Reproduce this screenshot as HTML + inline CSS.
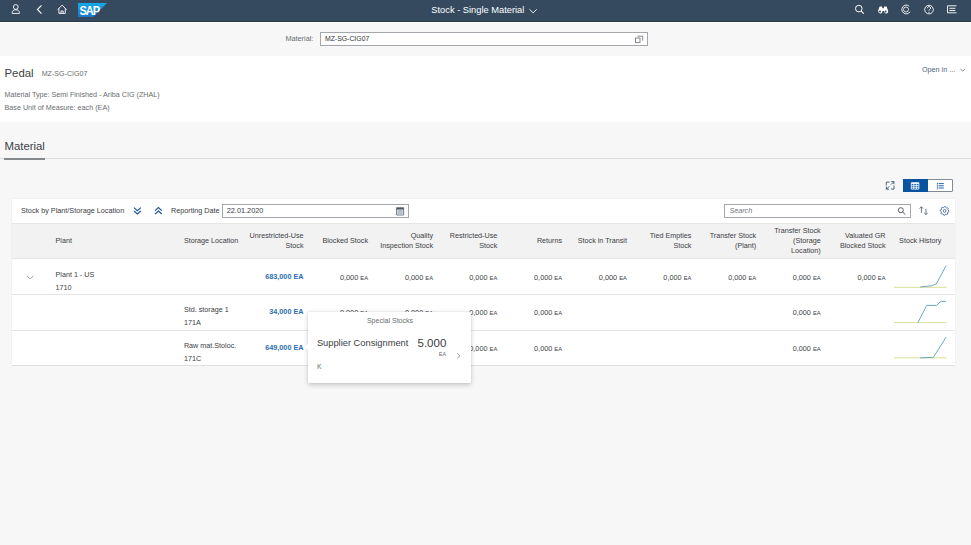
<!DOCTYPE html>
<html><head><meta charset="utf-8"><style>*{box-sizing:border-box;margin:0;padding:0}
html,body{width:971px;height:545px;overflow:hidden;background:#f7f7f7;font-family:"Liberation Sans",sans-serif;color:#32363a;position:relative}
.abs{position:absolute}
.t{position:absolute;white-space:nowrap}
svg{position:absolute;overflow:visible}
</style></head><body>
<div class="abs" style="left:0px;top:0px;width:971px;height:22px;background:#354a5f;border-bottom:1px solid #2b3a48"></div>
<div class="abs" style="left:0px;top:22px;width:971px;height:1px;background:#fdfdfd"></div>
<div class="t" style="left:431.30px;top:4.70px;font-size:9.3px;line-height:10px;color:#fff;">Stock - Single Material</div>
<svg style="left:0;top:0" width="971" height="22" fill="none" stroke="#fff" stroke-width="0.9">
<circle cx="15.8" cy="7" r="2.4"/>
<path d="M12.2 13.4v-1c0-1.7 1.5-2.6 3.6-2.6s3.6.9 3.6 2.6v1z"/>
<path d="M529.5 9.4l3.6 3.4l3.6-3.4" stroke-width="0.9"/>
<path d="M41.5 5.3l-4.1 4.2l4.1 4.2" stroke-width="1.1"/>
<path d="M57.6 9.6l4.5-4.4l4.5 4.4M58.9 8.4v5h6.4v-5M61 13.4v-2.4h2.2v2.4"/>
<circle cx="858.8" cy="8.6" r="3.3" stroke-width="1"/>
<path d="M861.2 11.1l2.6 2.6" stroke-width="1.1"/>
<path d="M909.2 6.2a4.4 4.4 0 1 0 0.8 5.6" stroke-width="0.9"/>
<circle cx="906" cy="9.5" r="2.5" stroke-width="0.8"/>
<circle cx="929" cy="9.6" r="4.3" stroke-width="0.9"/>
<path d="M927.4 8.2c0-1 .7-1.6 1.6-1.6s1.6.6 1.6 1.5c0 1.1-1.6 1.3-1.6 2.5M929 11.8v1.1" stroke-width="1"/>
<path d="M947.5 5.8h9M947.5 5.8v7h9M949.3 8.3h6M949.3 10.5h6" stroke-width="0.9"/>
</svg>
<svg style="left:0;top:0" width="971" height="22" fill="#fff">
<path d="M878 11.2l1.6-4.6h2.4l.4 1.6h1.4l.4-1.6h2.4l1.6 4.6a2 2 0 0 1-4 .6v-.8h-1.8v.8a2 2 0 0 1-4-.6z"/>
</svg>
<svg style="left:0;top:0" width="971" height="22"><circle cx="880" cy="11.4" r="1" fill="#354a5f"/><circle cx="885.6" cy="11.4" r="1" fill="#354a5f"/></svg>
<svg style="left:78px;top:3px" width="29" height="14" viewBox="0 0 29 14">
<defs><linearGradient id="g" x1="0" y1="0" x2="0" y2="1"><stop offset="0" stop-color="#16a9e6"/><stop offset="1" stop-color="#1a78c8"/></linearGradient></defs>
<path d="M0 0h29L15.2 14H0z" fill="url(#g)"/>
<text x="1.4" y="11.8" font-family="Liberation Sans" font-weight="bold" font-size="12.6" fill="#fff" letter-spacing="-1.2" textLength="19.6" lengthAdjust="spacingAndGlyphs">SAP</text>
</svg>
<div class="t" style="left:285.40px;top:34.10px;font-size:7.3px;line-height:10px;color:#6a6d70;">Material:</div>
<div class="abs" style="left:320px;top:32px;width:328px;height:14px;background:#fff;border:1px solid #a3a7ab"></div>
<div class="t" style="left:324.90px;top:33.80px;font-size:6.9px;line-height:10px;color:#32363a;">MZ-SG-CIG07</div>
<svg style="left:0;top:0" width="971" height="60" fill="none" stroke="#6a6d70" stroke-width="0.8">
<path d="M637.5 36.2h5.2v4.4"/><rect x="635.4" y="38" width="4.6" height="4.4"/>
</svg>
<div class="abs" style="left:0px;top:56px;width:971px;height:66px;background:#fff"></div>
<div class="t" style="left:4.50px;top:67.60px;font-size:11.4px;line-height:10px;color:#3c4044;">Pedal</div>
<div class="t" style="left:41.70px;top:69.00px;font-size:7.1px;line-height:10px;color:#6a6d70;">MZ-SG-CIG07</div>
<div class="t" style="left:4.50px;top:90.30px;font-size:7.2px;line-height:10px;color:#6a6d70;">Material Type: Semi Finished - Ariba CIG (ZHAL)</div>
<div class="t" style="left:4.50px;top:102.60px;font-size:7.2px;line-height:10px;color:#6a6d70;">Base Unit of Measure: each (EA)</div>
<div class="t" style="left:922.00px;top:65.40px;font-size:7.2px;line-height:10px;color:#4a6580;">Open in ...</div>
<svg style="left:0;top:0" width="971" height="100" fill="none" stroke="#6a6d70" stroke-width="0.8"><path d="M960.4 68.8l2.3 2.4l2.3-2.4"/></svg>
<div class="t" style="left:4.40px;top:141.40px;font-size:11.4px;line-height:10px;color:#3c4044;">Material</div>
<div class="abs" style="left:0px;top:158px;width:971px;height:1px;background:#dcdcdc"></div>
<div class="abs" style="left:4px;top:158px;width:41px;height:2px;background:#85888b"></div>
<svg style="left:0;top:0" width="971" height="200" fill="none" stroke="#3b5366" stroke-width="0.9">
<path d="M886.3 185.5v-3.4h3.4M894 185.5v3.6h-3M889.8 182.1"/>
<path d="M891.3 181.6h2.6v2.6M893.9 181.6l-3 3"/>
<path d="M889 189.2h-2.6v-2.6M886.4 189.2l3-3"/>
</svg>
<div class="abs" style="left:903px;top:179px;width:50px;height:13.2px;background:#fff;border:1px solid #7f8c98;border-radius:1px"></div>
<div class="abs" style="left:903px;top:179px;width:25px;height:13.2px;background:#0854a0"></div>
<svg style="left:0;top:0" width="971" height="200" fill="none" stroke-width="0.8">
<path d="M911.3 182.7h7.6v6.4h-7.6z" stroke="#fff"/>
<path d="M911.3 183.3h7.6" stroke="#fff" stroke-width="1.2"/>
<path d="M911.3 185.4h7.6M911.3 187.3h7.6M913.8 182.7v6.4M916.4 182.7v6.4" stroke="#fff"/>
<path d="M937.3 182.6v7.2" stroke="#6a7f94" stroke-width="0.6"/>
<path d="M938.6 183.6h5.2M938.6 185.8h5.2M938.6 188h5.2" stroke="#0854a0" stroke-width="0.9"/>
<path d="M937.2 183.6h.8M937.2 185.8h.8M937.2 188h.8" stroke="#0854a0" stroke-width="0.9"/>
</svg>
<div class="abs" style="left:12px;top:198.5px;width:942.5px;height:166px;background:#fff;box-shadow:0 0 0 0.5px rgba(0,0,0,0.04)"></div>
<div class="abs" style="left:12px;top:365px;width:942.5px;height:1.2px;background:#dedede"></div>
<div class="abs" style="left:12px;top:222.5px;width:943px;height:36.5px;background:#f2f2f2;border-top:1px solid #e5e5e5;border-bottom:1px solid #e5e5e5"></div>
<div class="abs" style="left:12px;top:294px;width:943px;height:1px;background:#e5e5e5"></div>
<div class="abs" style="left:12px;top:330px;width:943px;height:1px;background:#e5e5e5"></div>
<div class="t" style="left:21.00px;top:206.10px;font-size:7.25px;line-height:10px;color:#3c4044;">Stock by Plant/Storage Location</div>
<svg style="left:0;top:0" width="971" height="240" fill="none" stroke="#1f5a96" stroke-width="1.25">
<path d="M134 207.6l3.4 3l3.4-3M134 211l3.4 3l3.4-3"/>
<path d="M155 210.6l3.4-3l3.4 3M155 214l3.4-3l3.4 3"/>
</svg>
<div class="t" style="left:170.90px;top:206.30px;font-size:7.25px;line-height:10px;color:#3c4044;">Reporting Date</div>
<div class="abs" style="left:222px;top:204px;width:187px;height:14px;background:#fff;border:1px solid #a3a7ab"></div>
<div class="t" style="left:226.70px;top:206.20px;font-size:7.35px;line-height:10px;color:#3c4044;">22.01.2020</div>
<svg style="left:0;top:0" width="971" height="240" fill="none" stroke="#4a5a6a" stroke-width="0.8">
<path d="M396.6 207.6h7v7.4h-7z"/><path d="M396.6 208.8h7" stroke-width="1.6"/><path d="M397.5 211h5.2M397.5 213h5.2"/>
</svg>
<div class="abs" style="left:724px;top:204px;width:187px;height:14px;background:#fff;border:1px solid #a3a7ab"></div>
<div class="t" style="left:729.40px;top:205.90px;font-size:7.2px;line-height:10px;color:#74777a;font-style:italic">Search</div>
<svg style="left:0;top:0" width="971" height="240" fill="none" stroke="#32363a" stroke-width="0.8">
<circle cx="900.8" cy="210.2" r="2.5"/><path d="M902.6 212l2.8 2.6"/>
</svg>
<svg style="left:0;top:0" width="971" height="240" fill="none" stroke="#4a5866" stroke-width="0.8">
<path d="M921.4 213v-6.2M919.6 208.6l1.8-1.8l1.8 1.8M926 208.8v5.8M924.2 212.8l1.8 1.8l1.8-1.8"/>
</svg>
<svg style="left:0;top:0" width="971" height="240" fill="none" stroke="#2f5f8c" stroke-width="0.8">
<path d="M944.60 206.50L945.46 206.58L945.94 207.67L946.54 207.99L947.71 207.79L948.26 208.46L947.83 209.56L948.03 210.22L949.00 210.90L948.92 211.76L947.83 212.24L947.51 212.84L947.71 214.01L947.04 214.56L945.94 214.13L945.28 214.33L944.60 215.30L943.74 215.22L943.26 214.13L942.66 213.81L941.49 214.01L940.94 213.34L941.37 212.24L941.17 211.58L940.20 210.90L940.28 210.04L941.37 209.56L941.69 208.96L941.49 207.79L942.16 207.24L943.26 207.67L943.92 207.47z" stroke-linejoin="round"/>
<circle cx="944.6" cy="210.9" r="1.4"/>
</svg>
<div class="t" style="left:55.50px;top:235.90px;font-size:7.2px;line-height:10px;color:#3c4044;">Plant</div>
<div class="t" style="left:183.90px;top:235.90px;font-size:7.2px;line-height:10px;color:#3c4044;">Storage Location</div>
<div class="t" style="left:103.50px;width:200px;text-align:right;top:230.95px;font-size:7.2px;line-height:10px;color:#3c4044;">Unrestricted-Use</div>
<div class="t" style="left:103.50px;width:200px;text-align:right;top:240.85px;font-size:7.2px;line-height:10px;color:#3c4044;">Stock</div>
<div class="t" style="left:168.00px;width:200px;text-align:right;top:235.90px;font-size:7.2px;line-height:10px;color:#3c4044;">Blocked Stock</div>
<div class="t" style="left:233.00px;width:200px;text-align:right;top:230.95px;font-size:7.2px;line-height:10px;color:#3c4044;">Quality</div>
<div class="t" style="left:233.00px;width:200px;text-align:right;top:240.85px;font-size:7.2px;line-height:10px;color:#3c4044;">Inspection Stock</div>
<div class="t" style="left:297.30px;width:200px;text-align:right;top:230.95px;font-size:7.2px;line-height:10px;color:#3c4044;">Restricted-Use</div>
<div class="t" style="left:297.30px;width:200px;text-align:right;top:240.85px;font-size:7.2px;line-height:10px;color:#3c4044;">Stock</div>
<div class="t" style="left:362.10px;width:200px;text-align:right;top:235.90px;font-size:7.2px;line-height:10px;color:#3c4044;">Returns</div>
<div class="t" style="left:426.90px;width:200px;text-align:right;top:235.90px;font-size:7.2px;line-height:10px;color:#3c4044;">Stock in Transit</div>
<div class="t" style="left:491.40px;width:200px;text-align:right;top:230.95px;font-size:7.2px;line-height:10px;color:#3c4044;">Tied Empties</div>
<div class="t" style="left:491.40px;width:200px;text-align:right;top:240.85px;font-size:7.2px;line-height:10px;color:#3c4044;">Stock</div>
<div class="t" style="left:556.20px;width:200px;text-align:right;top:230.95px;font-size:7.2px;line-height:10px;color:#3c4044;">Transfer Stock</div>
<div class="t" style="left:556.20px;width:200px;text-align:right;top:240.85px;font-size:7.2px;line-height:10px;color:#3c4044;">(Plant)</div>
<div class="t" style="left:620.70px;width:200px;text-align:right;top:226.00px;font-size:7.2px;line-height:10px;color:#3c4044;">Transfer Stock</div>
<div class="t" style="left:620.70px;width:200px;text-align:right;top:235.90px;font-size:7.2px;line-height:10px;color:#3c4044;">(Storage</div>
<div class="t" style="left:620.70px;width:200px;text-align:right;top:245.80px;font-size:7.2px;line-height:10px;color:#3c4044;">Location)</div>
<div class="t" style="left:685.50px;width:200px;text-align:right;top:230.95px;font-size:7.2px;line-height:10px;color:#3c4044;">Valuated GR</div>
<div class="t" style="left:685.50px;width:200px;text-align:right;top:240.85px;font-size:7.2px;line-height:10px;color:#3c4044;">Blocked Stock</div>
<div class="t" style="left:899.10px;top:235.90px;font-size:7.2px;line-height:10px;color:#3c4044;">Stock History</div>
<svg style="left:0;top:0" width="971" height="300" fill="none" stroke="#8a8d90" stroke-width="0.8"><path d="M26.7 275.8l3.3 3.1l3.3-3.1"/></svg>
<div class="t" style="left:55.50px;top:269.50px;font-size:7.2px;line-height:10px;color:#3c4044;">Plant 1 - US</div>
<div class="t" style="left:55.50px;top:283.00px;font-size:7.2px;line-height:10px;color:#3c4044;">1710</div>
<div class="t" style="left:103.50px;width:200px;text-align:right;top:271.70px;font-size:7.25px;line-height:10px;color:#2a6db0;font-weight:bold">683,000 EA</div>
<div class="t" style="left:168.00px;width:200px;text-align:right;top:273.00px;font-size:7.3px;line-height:10px;color:#3c4044">0,000 <span style="font-size:5.8px">EA</span></div>
<div class="t" style="left:233.00px;width:200px;text-align:right;top:273.00px;font-size:7.3px;line-height:10px;color:#3c4044">0,000 <span style="font-size:5.8px">EA</span></div>
<div class="t" style="left:297.30px;width:200px;text-align:right;top:273.00px;font-size:7.3px;line-height:10px;color:#3c4044">0,000 <span style="font-size:5.8px">EA</span></div>
<div class="t" style="left:362.10px;width:200px;text-align:right;top:273.00px;font-size:7.3px;line-height:10px;color:#3c4044">0,000 <span style="font-size:5.8px">EA</span></div>
<div class="t" style="left:426.90px;width:200px;text-align:right;top:273.00px;font-size:7.3px;line-height:10px;color:#3c4044">0,000 <span style="font-size:5.8px">EA</span></div>
<div class="t" style="left:491.40px;width:200px;text-align:right;top:273.00px;font-size:7.3px;line-height:10px;color:#3c4044">0,000 <span style="font-size:5.8px">EA</span></div>
<div class="t" style="left:556.20px;width:200px;text-align:right;top:273.00px;font-size:7.3px;line-height:10px;color:#3c4044">0,000 <span style="font-size:5.8px">EA</span></div>
<div class="t" style="left:620.70px;width:200px;text-align:right;top:273.00px;font-size:7.3px;line-height:10px;color:#3c4044">0,000 <span style="font-size:5.8px">EA</span></div>
<div class="t" style="left:685.50px;width:200px;text-align:right;top:273.00px;font-size:7.3px;line-height:10px;color:#3c4044">0,000 <span style="font-size:5.8px">EA</span></div>
<div class="t" style="left:183.90px;top:304.80px;font-size:7.2px;line-height:10px;color:#3c4044;">Std. storage 1</div>
<div class="t" style="left:183.90px;top:317.60px;font-size:7.2px;line-height:10px;color:#3c4044;">171A</div>
<div class="t" style="left:103.50px;width:200px;text-align:right;top:306.70px;font-size:7.25px;line-height:10px;color:#2a6db0;font-weight:bold">34,000 EA</div>
<div class="t" style="left:168.00px;width:200px;text-align:right;top:307.70px;font-size:7.3px;line-height:10px;color:#3c4044">0,000 <span style="font-size:5.8px">EA</span></div>
<div class="t" style="left:233.00px;width:200px;text-align:right;top:307.70px;font-size:7.3px;line-height:10px;color:#3c4044">0,000 <span style="font-size:5.8px">EA</span></div>
<div class="t" style="left:297.30px;width:200px;text-align:right;top:307.70px;font-size:7.3px;line-height:10px;color:#3c4044">0,000 <span style="font-size:5.8px">EA</span></div>
<div class="t" style="left:362.10px;width:200px;text-align:right;top:307.70px;font-size:7.3px;line-height:10px;color:#3c4044">0,000 <span style="font-size:5.8px">EA</span></div>
<div class="t" style="left:620.70px;width:200px;text-align:right;top:307.70px;font-size:7.3px;line-height:10px;color:#3c4044">0,000 <span style="font-size:5.8px">EA</span></div>
<div class="t" style="left:183.90px;top:341.00px;font-size:7.2px;line-height:10px;color:#3c4044;">Raw mat.Stoloc.</div>
<div class="t" style="left:183.90px;top:353.60px;font-size:7.2px;line-height:10px;color:#3c4044;">171C</div>
<div class="t" style="left:103.50px;width:200px;text-align:right;top:342.50px;font-size:7.25px;line-height:10px;color:#2a6db0;font-weight:bold">649,000 EA</div>
<div class="t" style="left:168.00px;width:200px;text-align:right;top:343.50px;font-size:7.3px;line-height:10px;color:#3c4044">0,000 <span style="font-size:5.8px">EA</span></div>
<div class="t" style="left:233.00px;width:200px;text-align:right;top:343.50px;font-size:7.3px;line-height:10px;color:#3c4044">0,000 <span style="font-size:5.8px">EA</span></div>
<div class="t" style="left:297.30px;width:200px;text-align:right;top:343.50px;font-size:7.3px;line-height:10px;color:#3c4044">0,000 <span style="font-size:5.8px">EA</span></div>
<div class="t" style="left:362.10px;width:200px;text-align:right;top:343.50px;font-size:7.3px;line-height:10px;color:#3c4044">0,000 <span style="font-size:5.8px">EA</span></div>
<div class="t" style="left:620.70px;width:200px;text-align:right;top:343.50px;font-size:7.3px;line-height:10px;color:#3c4044">0,000 <span style="font-size:5.8px">EA</span></div>
<svg style="left:0;top:0" width="971" height="400" fill="none" stroke-width="0.9">
<path d="M894 287.3h52.5M894 322.6h52.5M894 357.9h52.5" stroke="#d4dd8a"/>
<path d="M920.3 287l11.1-1.2l5-2l9.7-18.1" stroke="#5a9fb8"/>
<path d="M917.9 322.6l8.8-17.2h9.7l4.5-4h5.2" stroke="#5a9fb8"/>
<path d="M920.3 357.9l13.1-.6l12.7-20.2" stroke="#5a9fb8"/>
</svg>
<div class="abs" style="left:308px;top:311.6px;width:163px;height:71.5px;background:#fff;border-radius:1px;box-shadow:0 1.5px 5px rgba(0,0,0,0.2),0 0 1px rgba(0,0,0,0.2)"></div>
<svg style="left:0;top:0" width="971" height="400"><path d="M308.3 343.5l-2.8 3.5l2.8 3.5z" fill="#fff"/></svg>
<div class="t" style="left:190.00px;width:400px;text-align:center;top:315.90px;font-size:7.05px;line-height:10px;color:#6a6d70;">Special Stocks</div>
<div class="t" style="left:316.90px;top:337.80px;font-size:9.3px;line-height:10px;color:#3c4044;">Supplier Consignment</div>
<div class="t" style="left:246.30px;width:200px;text-align:right;top:338.30px;font-size:11.5px;line-height:10px;color:#3c4044;">5.000</div>
<div class="t" style="left:246.10px;width:200px;text-align:right;top:349.40px;font-size:5.5px;line-height:10px;color:#6a6d70;">EA</div>
<svg style="left:0;top:0" width="971" height="400" fill="none" stroke="#6a6d70" stroke-width="0.7"><path d="M457.3 353.3l2.6 2.5l-2.6 2.5"/></svg>
<div class="t" style="left:316.90px;top:362.00px;font-size:7px;line-height:10px;color:#6a6d70;">K</div>
</body></html>
